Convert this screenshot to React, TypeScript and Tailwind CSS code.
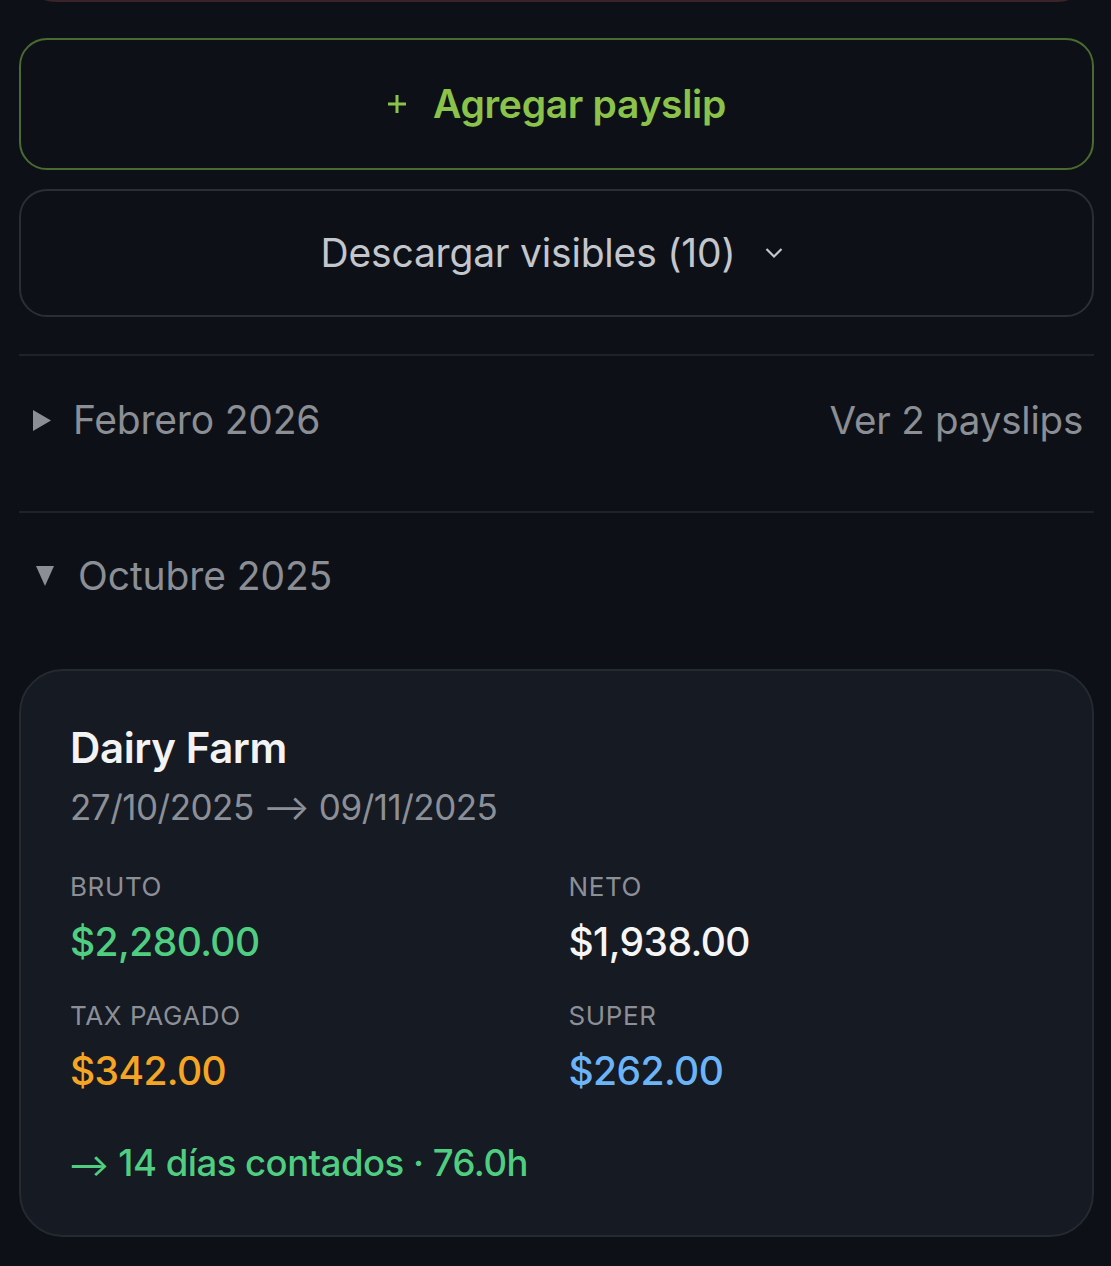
import React from "react";

function Triangle({ dir }: { dir: "right" | "down" }) {
  return dir === "right" ? (
    <svg width="18" height="21" viewBox="0 0 18 21" className="shrink-0">
      <polygon points="0,0 18,10.5 0,21" fill="#8b8e94" />
    </svg>
  ) : (
    <svg width="18" height="20" viewBox="0 0 18 20" className="shrink-0">
      <polygon points="0,0 18,0 9,20" fill="#8b8e94" />
    </svg>
  );
}

function Metric({ label, value, color }: { label: string; value: string; color: string }) {
  return (
    <div className="flex flex-col">
      <div className="text-[26px] leading-[30px] tracking-[0.6px] text-[#8b8f97]">{label}</div>
      <div className={`mt-[16px] text-[39px] leading-[48px] font-medium tracking-[-0.6px] ${color}`}>{value}</div>
    </div>
  );
}

export default function App() {
  return (
    <div className="min-h-[1266px] bg-[#0d1117] pl-[19px] pr-[17px] flex flex-col overflow-hidden font-['Inter',sans-serif]">
      <div className="-mt-[40px] h-[42px] rounded-b-[37px] border-2 border-t-0 border-[#3b2429]" />

      <button className="mt-[36px] h-[132px] rounded-[28px] border-2 border-[#4a6b2f] flex items-center justify-center gap-[26px]">
        <svg width="20" height="20" viewBox="0 0 20 20">
          <line x1="10" y1="1" x2="10" y2="19" stroke="#8bc34a" strokeWidth="3" />
          <line x1="1" y1="10" x2="19" y2="10" stroke="#8bc34a" strokeWidth="3" />
        </svg>
        <span className="text-[39px] font-semibold text-[#8bc34a] tracking-[-0.3px]">Agregar payslip</span>
      </button>

      <button className="mt-[19px] h-[128px] rounded-[28px] border-2 border-[#2a2e35] pr-[9px] flex items-center justify-center gap-[30px]">
        <span className="text-[39px] text-[#c3c6cc] tracking-[-0.2px]">Descargar visibles (10)</span>
        <svg width="18" height="12" viewBox="0 0 18 12">
          <polyline points="1.5,2 9,9.5 16.5,2" fill="none" stroke="#c3c6cc" strokeWidth="2.2" />
        </svg>
      </button>

      <div className="mt-[37px] h-[2px] bg-[#1e2229]" />

      <div className="pt-[41px] pb-[68px] pl-[14px] pr-[11px] flex items-center justify-between">
        <div className="flex items-center gap-[22px]">
          <Triangle dir="right" />
          <span className="text-[39px] leading-[46px] text-[#8b8e94] tracking-[-0.2px]">Febrero 2026</span>
        </div>
        <span className="text-[38.5px] leading-[46px] text-[#8b8e94] tracking-[-0.2px]">Ver 2 payslips</span>
      </div>

      <div className="h-[2px] bg-[#1e2229]" />

      <div className="pt-[40px] pl-[17px] flex items-center gap-[24px]">
        <Triangle dir="down" />
        <span className="text-[39px] leading-[46px] text-[#8b8e94] tracking-[-0.1px]">Octubre 2025</span>
      </div>

      <div className="mt-[70px] rounded-[44px] border-2 border-[#252930] bg-[#161a22] pl-[49px] pr-[49px] pt-[53px] pb-[48px]">
        <div className="text-[42px] leading-[48px] font-semibold text-[#f3f3f3] tracking-[-0.4px]">Dairy Farm</div>
        <div className="mt-[13px] text-[35px] leading-[44px] text-[#8b8f97] tracking-[-0.5px]">
          27/10/2025 ⟶ 09/11/2025
        </div>
        <div className="mt-[43px] grid grid-cols-2 gap-x-[24px] gap-y-[35px]">
          <Metric label="BRUTO" value="$2,280.00" color="text-[#4fce82]" />
          <Metric label="NETO" value="$1,938.00" color="text-[#f5f5f5]" />
          <Metric label="TAX PAGADO" value="$342.00" color="text-[#f5a524]" />
          <Metric label="SUPER" value="$262.00" color="text-[#6cb4f8]" />
        </div>
        <div className="mt-[46px] text-[36.5px] leading-[44px] font-medium text-[#4fce82] tracking-[-0.5px]">
          <span className="-ml-[2px] text-[31px]">⟶</span> 14 días contados · 76.0h
        </div>
      </div>
    </div>
  );
}
